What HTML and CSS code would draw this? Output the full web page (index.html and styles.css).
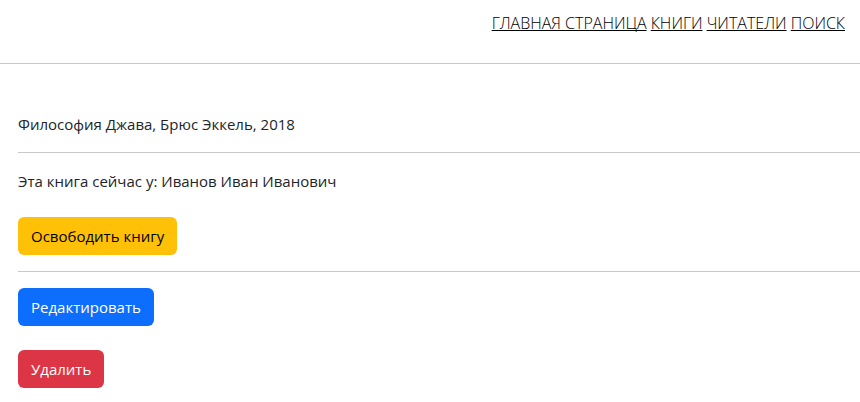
FILE: index.html
```html
<!DOCTYPE html>
<html lang="ru">
<head>
<meta charset="utf-8">
<title>Книга</title>
<link rel="stylesheet" href="styles.css">
</head>
<body>
<header class="header">
<nav class="nav">
<a href="#">ГЛАВНАЯ СТРАНИЦА</a>
<a href="#">КНИГИ</a>
<a href="#">ЧИТАТЕЛИ</a>
<a href="#">ПОИСК</a>
</nav>
</header>
<main class="content">
<p class="line">Философия Джава, Брюс Эккель, 2018</p>
<hr class="rule">
<p class="line">Эта книга сейчас у: Иванов Иван Иванович</p>
<form class="action"><button type="button" class="btn btn-warning">Освободить книгу</button></form>
<hr class="rule">
<button type="button" class="btn btn-primary">Редактировать</button>
<form class="action"><button type="button" class="btn btn-danger">Удалить</button></form>
</main>
</body>
</html>
```

FILE: styles.css
```css
* {
  box-sizing: border-box;
}

body {
  margin: 0;
  background: #fff;
  color: #212529;
  font-family: "Segoe UI", "Open Sans", "Noto Sans", sans-serif;
  font-size: 15px;
  line-height: 24px;
}

.header {
  padding: 11px 15px 28px;
  border-bottom: 1px solid #c8c9ca;
}

.nav {
  font-size: 16px;
  font-weight: 300;
  text-align: right;
}

.nav a {
  color: #000;
  text-decoration-skip-ink: none;
}

.content {
  padding: 48px 0 14px 18px;
}

.line {
  margin: 0;
}

.rule {
  margin: 16px 0;
  border: 0;
  border-top: 1px solid #c8c9ca;
}

.action {
  margin-top: 24px;
}

.btn {
  display: block;
  padding: 6px 12px;
  border: 1px solid transparent;
  border-radius: 6px;
  font: inherit;
  cursor: pointer;
}

.btn-warning {
  background: #ffc107;
  color: #000;
}

.btn-primary {
  background: #0d6efd;
  color: #fff;
}

.btn-danger {
  background: #dc3545;
  color: #fff;
}
```
